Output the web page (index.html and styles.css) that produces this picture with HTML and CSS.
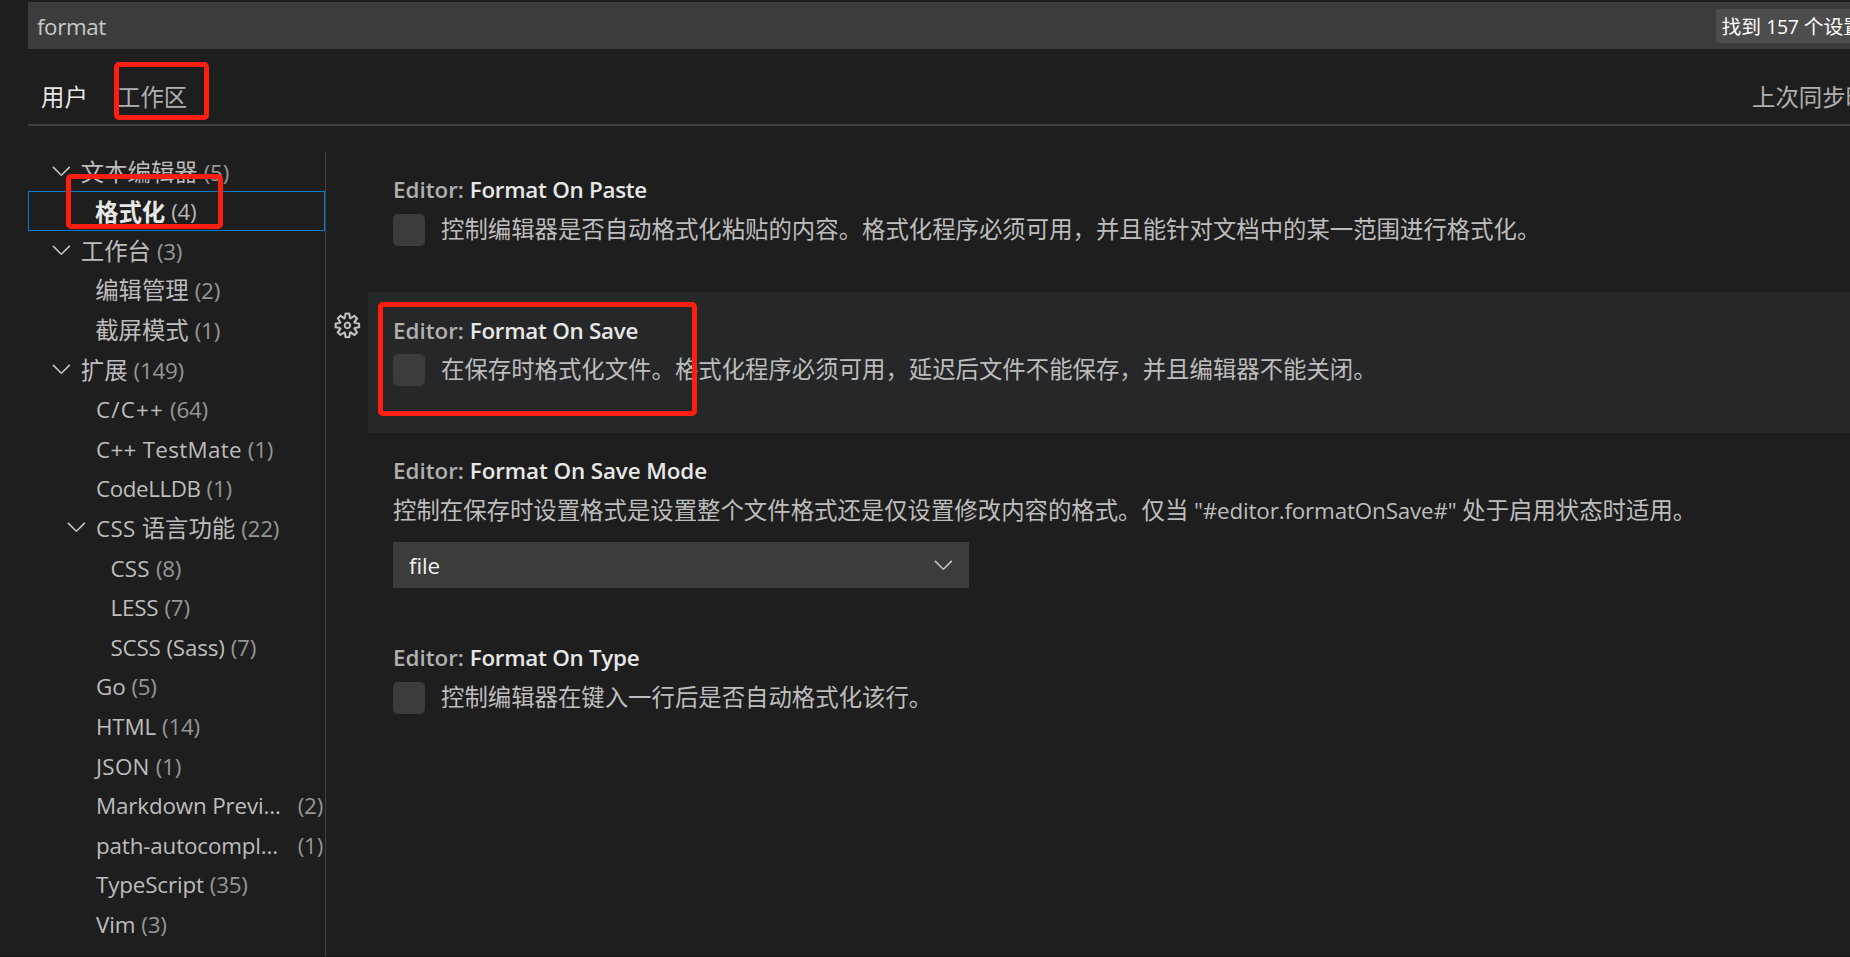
FILE: index.html
```html
<!DOCTYPE html>
<html lang="zh-CN">
<head>
<meta charset="utf-8">
<title>设置</title>
<link rel="stylesheet" href="styles.css">
</head>
<body>
<svg class="defs" width="0" height="0">
  <symbol id="chevron" viewBox="0 0 16 16"><path fill="currentColor" d="M7.976 10.072l4.357-4.357.62.618L8.284 11h-.618L3 6.333l.619-.618 4.357 4.357z"/></symbol>
  <symbol id="gear" viewBox="0 0 16 16"><path fill="currentColor" stroke="currentColor" stroke-width=".15" fill-rule="evenodd" d="M9.1 4.4L8.6 2H7.4l-.5 2.4-.7.3-2-1.3-.9.8 1.3 2-.2.7-2.4.5v1.2l2.4.5.3.8-1.3 2 .8.8 2-1.3.8.3.4 2.3h1.2l.5-2.4.8-.3 2 1.3.8-.8-1.3-2 .3-.8 2.3-.4V7.4l-2.4-.5-.3-.8 1.3-2-.8-.8-2 1.3-.7-.2zM9.4 1l.5 2.4L12 2.1l2 2-1.4 2.1 2.4.4v2.8l-2.4.5L14 12l-2 2-2.1-1.4-.5 2.4H6.6l-.5-2.4L4 13.9l-2-2 1.4-2.1L1 9.4V6.6l2.4-.5L2.1 4l2-2 2.1 1.4.4-2.4h2.8zm.6 7c0 1.1-.9 2-2 2s-2-.9-2-2 .9-2 2-2 2 .9 2 2zM8 9c.6 0 1-.4 1-1s-.4-1-1-1-1 .4-1 1 .4 1 1 1z"/></symbol>
</svg>
<div class="editor">
  <div class="search"><span class="query en snug">format</span><span class="badge">找到 <span class="num">157</span> 个设置</span></div>
  <div class="tabs"><span class="tab active">用户</span><span class="tab">工作区</span><span class="sync">上次同步时间</span></div>
  <div class="body">
    <nav class="toc">
      <div class="row l0"><svg class="icon"><use href="#chevron"/></svg><span>文本编辑器</span><span class="count">(5)</span></div>
      <div class="row l1 selected"><span>格式化</span><span class="count">(4)</span></div>
      <div class="row l0"><svg class="icon"><use href="#chevron"/></svg><span>工作台</span><span class="count">(3)</span></div>
      <div class="row l1 cjk"><span>编辑管理</span><span class="count">(2)</span></div>
      <div class="row l1 cjk"><span>截屏模式</span><span class="count">(1)</span></div>
      <div class="row l0"><svg class="icon"><use href="#chevron"/></svg><span>扩展</span><span class="count">(149)</span></div>
      <div class="row l1"><span class="en plus">C/C++</span><span class="count">(64)</span></div>
      <div class="row l1"><span class="en loose">C++ TestMate</span><span class="count">(1)</span></div>
      <div class="row l1"><span class="en snug">CodeLLDB</span><span class="count">(1)</span></div>
      <div class="row l1 open"><svg class="icon"><use href="#chevron"/></svg><span><span class="en loose">CSS </span>语言功能</span><span class="count">(22)</span></div>
      <div class="row l2"><span class="en loose">CSS</span><span class="count">(8)</span></div>
      <div class="row l2"><span class="en">LESS</span><span class="count">(7)</span></div>
      <div class="row l2"><span class="en">SCSS (Sass)</span><span class="count">(7)</span></div>
      <div class="row l1"><span class="en">Go</span><span class="count">(5)</span></div>
      <div class="row l1"><span class="en">HTML</span><span class="count">(14)</span></div>
      <div class="row l1"><span class="en loose">JSON</span><span class="count">(1)</span></div>
      <div class="row l1 wide"><span class="en">Markdown Previ...</span><span class="count">(2)</span></div>
      <div class="row l1 wide"><span class="en">path-autocompl...</span><span class="count">(1)</span></div>
      <div class="row l1"><span class="en">TypeScript</span><span class="count">(35)</span></div>
      <div class="row l1"><span class="en">Vim</span><span class="count">(3)</span></div>
    </nav>
    <main class="settings">
      <section class="item">
        <div class="gutter"></div>
        <div class="content">
          <h3 class="title"><span class="cat">Editor: </span>Format On Paste</h3>
          <div class="desc"><span class="check"></span><span class="text">控制编辑器是否自动格式化粘贴的内容。格式化程序必须可用，并且能针对文档中的某一范围进行格式化。</span></div>
        </div>
      </section>
      <section class="item">
        <div class="gutter"><svg class="icon"><use href="#gear"/></svg></div>
        <div class="content focused">
          <h3 class="title"><span class="cat">Editor: </span>Format On Save</h3>
          <div class="desc"><span class="check"></span><span class="text">在保存时格式化文件。格式化程序必须可用，延迟后文件不能保存，并且编辑器不能关闭。</span></div>
        </div>
      </section>
      <section class="item tall">
        <div class="gutter"></div>
        <div class="content">
          <h3 class="title mode"><span class="cat">Editor: </span>Format On Save Mode</h3>
          <div class="desc"><span>控制在保存时设置格式是设置整个文件格式还是仅设置修改内容的格式。仅当<span class="en"> "#editor.formatOnSave#" </span>处于启用状态时适用。</span></div>
          <div class="select"><span class="en">file</span><svg class="icon"><use href="#chevron"/></svg></div>
        </div>
      </section>
      <section class="item">
        <div class="gutter"></div>
        <div class="content">
          <h3 class="title"><span class="cat">Editor: </span>Format On Type</h3>
          <div class="desc"><span class="check"></span><span class="text">控制编辑器在键入一行后是否自动格式化该行。</span></div>
        </div>
      </section>
    </main>
  </div>
</div>
<div class="mark mark-workspace"></div>
<div class="mark mark-formatting"></div>
<div class="mark mark-save"></div>
</body>
</html>
```
FILE: styles.css
```css
* { box-sizing: border-box; }
body {
  margin: 0;
  width: 1850px;
  height: 957px;
  overflow: hidden;
  position: relative;
  background: #1e1e1e;
  color: #bdbdbd;
  font-family: "Open Sans", "Noto Sans CJK SC", sans-serif;
  font-size: 23.4px;
  white-space: nowrap;
}
.defs { display: block; height: 0; }
.editor { padding: 2px 0 0 28px; height: 957px; display: flex; flex-direction: column; overflow: hidden; border-bottom: 1px solid #191617; }
.icon { width: 28.8px; height: 28.8px; flex: none; color: #c5c5c5; }
.en { font-size: 22.4px; letter-spacing: -0.15px; white-space: pre; }
.en.snug { letter-spacing: -0.42px; }
.en.loose { letter-spacing: 0.3px; }
.en.plus { letter-spacing: 1.2px; }

.search { height: 47px; flex: none; background: #3c3c3c; display: flex; align-items: center; overflow: hidden; }
.query { width: 1688px; flex: none; padding: 2px 0 0 9px; line-height: 47px; color: #c8c8c8; }
.badge { flex: none; width: 170px; height: 34px; line-height: 36px; padding-left: 5.5px; border-radius: 3px; background: #4d4d4d; color: #fff; font-size: 19.8px; }
.num { font-size: 19.4px; letter-spacing: -0.3px; }

.tabs { height: 77px; flex: none; border-bottom: 2px solid #404040; display: flex; padding: 26px 0 0 13px; line-height: 44px; overflow: hidden; color: #b0b0b0; }
.tab { width: 76px; flex: none; }
.tab.active { color: #e7e7e7; }
.sync { margin-left: 1559px; flex: none; }

.body { flex: 1; display: flex; padding-top: 25.6px; min-height: 0; }
.toc { width: 298px; flex: none; border-right: 1px solid #414141; }
.row { height: 39.6px; line-height: 41.8px; display: flex; gap: 6px; color: #bdbdbd; }
.l0 { padding-left: 19px; }
.l0 .icon, .open .icon { margin-top: 4.5px; }
.l0 .icon { margin-right: -1px; }
.l1 { padding-left: 68px; }
.l1.cjk { padding-left: 67.2px; }
.l1.open { padding-left: 34px; }
.open .icon { margin-right: -0.8px; }
.l2 { padding-left: 82.4px; }
.wide { justify-content: space-between; padding-right: 2px; }
.selected { border: 1px solid #007fd4; padding-left: 66px; line-height: 40.4px; color: #e7e7e7; font-weight: 700; }
.count { font-size: 22.4px; letter-spacing: -0.25px; color: #969696; font-weight: 400; }
.selected .count { color: #b5b5b5; }

.settings { flex: 1; min-width: 0; }
.item { height: 140.6px; display: flex; }
.item.tall { height: 187.4px; }
.gutter { width: 42px; flex: none; padding: 18.6px 0 0 7.2px; }
.content { flex: 1; min-width: 0; padding: 22px 0 0 25px; }
.focused { background: #252728; }
.focused .title { line-height: 33.4px; }
.title { margin: 0; height: 32px; line-height: 32px; font-size: 22.4px; font-weight: 600; letter-spacing: -0.28px; color: #e7e7e7; }
.title.mode { letter-spacing: -0.1px; }
.cat { color: #b0b0b0; letter-spacing: 0; }
.desc { display: flex; align-items: center; height: 32px; margin-top: 8px; line-height: 32px; }
.text { padding-bottom: 2px; }
.check { width: 32px; height: 32px; border-radius: 5px; background: #3c3c3c; margin-right: 16px; flex: none; }
.select { width: 576px; height: 46px; margin-top: 15px; padding: 0 11px 0 16px; background: #3c3c3c; color: #f0f0f0; display: flex; align-items: center; justify-content: space-between; }
.select .en { padding-top: 1px; }

.mark { position: absolute; border: 5px solid #ff1e10; border-radius: 5px; }
.mark-workspace { left: 114px; top: 62px; width: 95px; height: 58px; }
.mark-formatting { left: 66px; top: 174px; width: 157px; height: 55px; }
.mark-save { left: 378px; top: 302px; width: 319px; height: 114px; }
```
